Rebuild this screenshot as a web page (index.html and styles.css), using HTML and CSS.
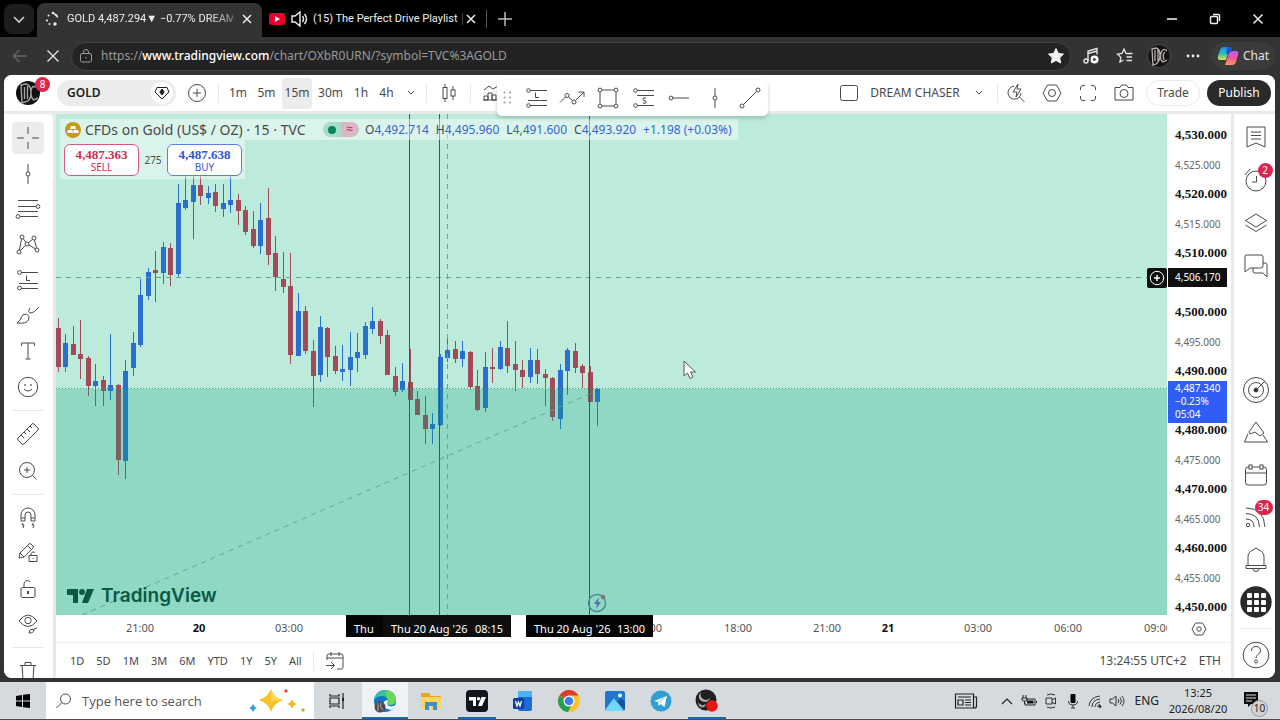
FILE: index.html
```html
<!DOCTYPE html>
<html lang="en">
<head>
<meta charset="utf-8">
<title>GOLD 4,487.294 ▼ −0.77% DREAM CHASER</title>
<link rel="stylesheet" href="styles.css">
</head>
<body>
<div class="tabs">
  <button class="tab-menu" aria-label="Tab actions"><svg width="14" height="14" viewBox="0 0 14 14"><path d="M2 5l5 5 5-5" stroke-width="1.6"/></svg></button>
  <div class="tab tab-active">
    <svg class="fill" width="16" height="16" viewBox="0 0 16 16"><circle cx="3" cy="9.500" r="1.100"/><circle cx="4.500" cy="4.500" r="1"/><circle cx="9" cy="2" r="1.300"/><path d="M10 2l3 1.500 1.500 3h-1.500l-3-3z"/><circle cx="11" cy="13" r="1.700"/><circle cx="5.500" cy="13" r="1"/></svg>
    <span class="tab-title fade">GOLD 4,487.294▼ −0.77% DREAM</span>
    <button class="tab-close" aria-label="Close tab"><svg width="12" height="12" viewBox="0 0 12 12"><path d="M2 2l8 8M10 2l-8 8" stroke-width="1.5"/></svg></button>
  </div>
  <div class="tab tab-second">
    <svg width="16" height="12" viewBox="0 0 16 12"><rect width="16" height="12" rx="3" fill="#e8002d" stroke="none"/><path d="M6 3l5 3-5 3z" fill="#fff" stroke="none"/></svg>
    <svg width="18" height="18" viewBox="0 0 18 18"><path d="M2 6h3l5-4v14l-5-4H2zM12.500 6q2 3 0 6M14.500 4q4 5 0 10" stroke-width="1.400"/></svg>
    <span class="tab-title">(15) The Perfect Drive Playlist</span>
    <i class="tab-sep"></i>
    <button class="tab-close" aria-label="Close tab"><svg width="12" height="12" viewBox="0 0 12 12"><path d="M2 2l8 8M10 2l-8 8" stroke-width="1.5"/></svg></button>
  </div>
  <i class="tab-bar"></i>
  <button class="tab-new" aria-label="New tab"><svg width="16" height="16" viewBox="0 0 16 16"><path d="M8 1v14M1 8h14" stroke-width="1.500"/></svg></button>
  <div class="window-controls">
    <button aria-label="Minimise"><svg width="12" height="12" viewBox="0 0 12 12"><path d="M1 6h10" stroke-width="1.600"/></svg></button>
    <button aria-label="Restore"><svg width="12" height="12" viewBox="0 0 12 12"><rect x="1.500" y="3.500" width="7" height="7" rx="1" stroke-width="1.500"/><path d="M4 1.500h5.500q1 0 1 1V8" stroke-width="1.500"/></svg></button>
    <button aria-label="Close"><svg width="12" height="12" viewBox="0 0 12 12"><path d="M1.500 1.500l9 9M10.500 1.500l-9 9" stroke-width="1.500"/></svg></button>
  </div>
</div>

<div class="address-row">
  <button class="nav nav-dim" aria-label="Back"><svg width="16" height="14" viewBox="0 0 16 14"><path d="M15 7H1.500M7.500 1l-6 6 6 6" stroke-width="1.400"/></svg></button>
  <button class="nav" aria-label="Stop"><svg width="14" height="14" viewBox="0 0 14 14"><path d="M1.500 1.500l11 11M12.500 1.500l-11 11" stroke-width="1.400"/></svg></button>
  <div class="address">
    <svg width="14" height="14" viewBox="0 0 14 14"><rect x="1.500" y="4.500" width="11" height="8.500" rx="1.500"/><path d="M4.500 4.500V3a2.500 2.500 0 0 1 5 0v1.500M7 8v1.500"/></svg>
    <a class="url" href="#">https://<b>www.tradingview.com</b>/chart/OXbR0URN/?symbol=TVC%3AGOLD</a>
    <svg class="star" width="18" height="18" viewBox="0 0 18 18"><path d="M9 1.500l2.300 4.900 5.200.7-3.800 3.600 1 5.300L9 13.400 4.300 16l1-5.300L1.500 7.100l5.200-.7z" fill="#f2f2f2" stroke="#f2f2f2"/></svg>
  </div>
  <div class="browser-tools">
    <button aria-label="Media"><svg width="18" height="18" viewBox="0 0 18 18"><path d="M6 14V4l9-2.500v6M6 6.500l9-2.500" stroke-width="1.400"/><circle cx="4" cy="14" r="2" stroke-width="1.400"/><circle cx="12.500" cy="12.500" r="4" fill="#fff" stroke="none"/><path d="M11.300 10.500l3.200 2-3.200 2z" fill="#333" stroke="none"/></svg></button>
    <button aria-label="Favourites"><svg width="18" height="18" viewBox="0 0 18 18"><path d="M10 6.500L8 2 6 6.500l-4.500.6 3.300 3.200-.8 4.700 3.500-2M10 6.500h6.500M10.500 10H16M10.500 13.500H16" stroke-width="1.300"/></svg></button>
    <button aria-label="Profile"><svg width="24" height="24" viewBox="0 0 24 24"><circle cx="12" cy="12" r="11.500" fill="#171313" stroke="#6b6767" stroke-width=".6"/><path d="M5 5l4-1q4 1 4 7t-4 9l-3 1zM8 6v11M11 5v12M20 7q-4-4-6 2t2 9l4-2M18 8q-3 2-1 8" stroke="#b9b3b0" stroke-width="1.300"/></svg></button>
    <button aria-label="More"><svg width="14" height="4" viewBox="0 0 14 4"><g fill="#eee" stroke="none"><circle cx="2" cy="2" r="1.400"/><circle cx="7" cy="2" r="1.400"/><circle cx="12" cy="2" r="1.400"/></g></svg></button>
    <button class="chat"><svg width="22" height="20" viewBox="0 0 22 20"><defs><linearGradient id="ca" x2="0" y2="1"><stop stop-color="#1a8df0"/><stop offset=".55" stop-color="#27c7b4"/><stop offset="1" stop-color="#ffd43a"/></linearGradient><linearGradient id="cb" x2="0" y2="1"><stop stop-color="#b25cff"/><stop offset=".5" stop-color="#f0559d"/><stop offset="1" stop-color="#ff9a4a"/></linearGradient></defs><path d="M6 1h7l-4 13H3q-3 0-2-4L3 4q1-3 3-3z" fill="url(#ca)" stroke="none"/><path d="M16 5h3q3 0 2 4l-2 7q-1 3-4 3H8l4-12q1-2 4-2z" fill="url(#cb)" stroke="none"/><path d="M10 1h3q2 0 2 4-3 0-4 3H9z" fill="#2453d6" stroke="none"/></svg>Chat</button>
  </div>
</div>

<main class="page">
  <header class="header">
    <button class="avatar" aria-label="Account"><svg width="26" height="26" viewBox="0 0 26 26"><circle cx="13" cy="13" r="12" fill="#111" stroke="none"/><path d="M6 5l5-1q5 1 5 9t-6 9l-3 1zM9.500 7v12M12.500 6v13M21 7q-5-2-5 5t3 8l4-2" stroke="#a7a2a2" stroke-width="1.400"/></svg><span class="badge">8</span></button>
    <div class="symbol"><button class="symbol-name">GOLD</button><button class="symbol-flag" aria-label="Flag"><svg width="16" height="14" viewBox="0 0 16 14"><path d="M3 1.500h10l2 4.500-7 7-7-7z"/><path d="M8 3l2.200 3L8 9 5.800 6z" fill="#222"/></svg></button></div>
    <button class="plus" aria-label="Compare"><svg width="20" height="20" viewBox="0 0 20 20"><circle cx="10" cy="10" r="8.500"/><path d="M10 6v8M6 10h8"/></svg></button>
    <i class="vr"></i>
    <div class="intervals">
      <button class="w26">1m</button><button class="w30">5m</button><button class="w30 on">15m</button><button class="w36">30m</button><button class="w24">1h</button><button class="w26">4h</button>
      <button class="w22" aria-label="More intervals"><svg width="8" height="6" viewBox="0 0 8 6"><path d="M1 1l3 3 3-3"/></svg></button>
    </div>
    <i class="vr"></i>
    <button class="tool44" aria-label="Chart type"><svg width="16" height="20" viewBox="0 0 16 20"><rect x="2" y="4.500" width="4" height="11"/><path d="M4 1v3.500M4 15.500V19M12 3v4M12 13v4"/><rect x="10" y="7" width="4" height="6"/></svg></button>
    <i class="vr"></i>
    <button class="tool40" aria-label="Indicators"><svg width="20" height="20" viewBox="0 0 20 20"><path d="M3 7l5-4 4 3 5-3M3 17v-4h4v4zM7 17v-7h4v7M11 17v-5h4v5zM2 17h14"/></svg></button>
    <div class="header-right">
      <button class="layout-box" aria-label="Layout"><svg width="20" height="18" viewBox="0 0 20 18"><rect x="1.500" y="1.500" width="17" height="15" rx="2"/></svg></button>
      <button class="layout-name">DREAM CHASER</button>
      <button class="layout-menu" aria-label="Manage layouts"><svg width="8" height="6" viewBox="0 0 8 6"><path d="M1 1l3 3 3-3"/></svg></button>
      <i class="vr"></i>
      <button class="w36" aria-label="Quick search"><svg width="20" height="20" viewBox="0 0 20 20"><path d="M8 3.200A6.500 6.500 0 1 0 15 10M13.500 14l5 5M12 1l-5 8h4l-1 5 5-8h-4z"/></svg></button>
      <button class="w36" aria-label="Settings"><svg width="20" height="20" viewBox="0 0 20 20"><path d="M5.500 2h9l4.500 8-4.500 8h-9L1 10z"/><circle cx="10" cy="10" r="3.500"/></svg></button>
      <button class="w36" aria-label="Fullscreen"><svg width="18" height="18" viewBox="0 0 18 18"><path d="M6 1.500H4Q1.500 1.500 1.500 4v2M12 1.500h2q2.500 0 2.500 2.500v2M6 16.500H4Q1.500 16.500 1.500 14v-2M12 16.500h2q2.500 0 2.500-2.500v-2"/></svg></button>
      <button class="w36" aria-label="Snapshot"><svg width="20" height="18" viewBox="0 0 20 18"><path d="M1 3.500h5L7.500 1h5L14 3.500h5V16H1z"/><circle cx="10" cy="9.500" r="4"/></svg></button>
      <button class="trade">Trade</button>
      <button class="publish">Publish</button>
    </div>
    <div class="favorites">
      <svg class="grip" width="9" height="14" viewBox="0 0 9 14"><g fill="#999" stroke="none"><circle cx="1.500" cy="1.500" r="1"/><circle cx="7" cy="1.500" r="1"/><circle cx="1.500" cy="6.500" r="1"/><circle cx="7" cy="6.500" r="1"/><circle cx="1.500" cy="11.500" r="1"/><circle cx="7" cy="11.500" r="1"/></g></svg>
      <button aria-label="Long position"><svg width="24" height="22" viewBox="0 0 24 22"><path d="M5 3.500h17M3 13.500h19M5 18.500h17M10.500 5.500v5h3.500"/><circle cx="3.500" cy="3.500" r="1.800"/><circle cx="3.500" cy="18.500" r="1.800"/></svg></button>
      <button aria-label="Path"><svg width="26" height="18" viewBox="0 0 26 18"><path d="M1 13.500l5.500-5.500M9.500 8l4 3.500M16.500 11.500L25 3M19.500 3H25v5"/><circle cx="8" cy="6.500" r="2"/><circle cx="15" cy="13" r="2"/></svg></button>
      <button aria-label="Rectangle"><svg width="22" height="22" viewBox="0 0 22 22"><path d="M5 3h12M5 19h12M3 5v12M19 5v12"/><circle cx="3" cy="3" r="1.900"/><circle cx="19" cy="3" r="1.900"/><circle cx="3" cy="19" r="1.900"/><circle cx="19" cy="19" r="1.900"/></svg></button>
      <button aria-label="Short position"><svg width="24" height="22" viewBox="0 0 24 22"><path d="M5 3.500h17M5 8.500h17M5 18.500h17M14 11h-2.500q-1 1.300 0 2.300l2 .5q1 1.200 0 2.400H11"/><circle cx="3.500" cy="3.500" r="1.800"/><circle cx="3.500" cy="18.500" r="1.800"/></svg></button>
      <button aria-label="Horizontal ray"><svg width="22" height="6" viewBox="0 0 22 6"><path d="M5 3h16"/><circle cx="3" cy="3" r="1.900"/></svg></button>
      <button aria-label="Vertical line"><svg width="6" height="20" viewBox="0 0 6 20"><path d="M3 0v8M3 12v8"/><circle cx="3" cy="10" r="2"/></svg></button>
      <button aria-label="Trend line"><svg width="22" height="22" viewBox="0 0 22 22"><path d="M4.500 17.500l13-13"/><circle cx="3" cy="19" r="2"/><circle cx="19" cy="3" r="2"/></svg></button>
    </div>
  </header>

  <div class="body">
    <nav class="left" aria-label="Drawing tools">
      <div class="lg lg1">
        <button class="on" aria-label="Cross"><svg width="24" height="24" viewBox="0 0 24 24"><path d="M12 1v7M12 16v7M1 12h7M16 12h7"/></svg></button>
        <button aria-label="Vertical line"><svg width="6" height="20" viewBox="0 0 6 20"><path d="M3 0v8M3 12v8"/><circle cx="3" cy="10" r="2"/></svg></button>
        <button aria-label="Fibonacci"><svg width="26" height="22" viewBox="0 0 26 22"><path d="M3 2.500h20M3 8.500h18M3 13.500h20M5 18.500h18"/><circle cx="23" cy="8.500" r="1.900"/><circle cx="3" cy="18.500" r="1.900"/></svg></button>
        <button aria-label="Patterns"><svg width="24" height="22" viewBox="0 0 24 22"><circle cx="6" cy="3" r="2"/><circle cx="18" cy="4" r="2"/><circle cx="11" cy="10" r="2"/><circle cx="3" cy="18" r="2"/><circle cx="21" cy="16" r="2"/><path d="M5.500 5L3.500 16M7.200 4.700l2.800 3.700M16.500 5.500l-4 3M18.500 6l2 8M9.500 11.500l-5 5M13 11l6.500 4"/></svg></button>
        <button aria-label="Forecasting"><svg width="24" height="22" viewBox="0 0 24 22"><path d="M5 3.500h17M3 14.500h19M5 19.500h17M10.500 6.500v5h3.500"/><circle cx="3.500" cy="3.500" r="1.900"/><circle cx="3.500" cy="19" r="1.900"/></svg></button>
        <button aria-label="Brush"><svg width="26" height="20" viewBox="0 0 26 20"><path d="M2 17q4-3 4.500-6t5-3q4 2 2 6-2 4-11.500 3zM15 2q-3 5 1 5 3 0 8-6"/></svg></button>
        <button aria-label="Text"><svg width="16" height="20" viewBox="0 0 16 20"><path d="M1.500 5V2h13v3M8 2v16M5.500 18h5"/></svg></button>
        <button aria-label="Icons"><svg width="22" height="22" viewBox="0 0 22 22"><circle cx="11" cy="11" r="9.700"/><path d="M7 13q4 4 8 0"/><circle cx="8" cy="9" r=".5"/><circle cx="14" cy="9" r=".5"/></svg></button>
      </div>
      <hr>
      <div class="lg lg2">
        <button aria-label="Measure"><svg width="24" height="24" viewBox="0 0 24 24"><path d="M2 16L16 2q1-1 2 0l4 4q1 1 0 2L8 22q-1 1-2 0l-4-4q-1-1 0-2zM5 13l3 3M8 10l2 2M11 7l3 3M14 4l2 2"/></svg></button>
        <button aria-label="Zoom in"><svg width="20" height="20" viewBox="0 0 20 20"><circle cx="9" cy="9" r="7.500"/><path d="M9 6v6M6 9h6M14.500 14.500l4 4"/></svg></button>
      </div>
      <hr>
      <div class="lg lg3">
        <button aria-label="Magnet"><svg width="20" height="24" viewBox="0 0 20 24"><path d="M3 15V9a7 7 0 0 1 14 0v6h-4V9a3 3 0 0 0-6 0v6zM3 12h4M13 12h4M5 17l-1 2h2l-1 3M15 17l-1 2h2l-1 3"/></svg></button>
        <button aria-label="Keep drawing"><svg width="22" height="22" viewBox="0 0 22 22"><path d="M2 16l1-5 9-9q1-1 2 0l2 2q1 1 0 2l-9 9zM3 11l4 4M10.500 3.500l4 4M12 13.500h8v6h-8zM14 13.500v-2q2-3 4-1M16 16v1"/></svg></button>
        <button aria-label="Lock drawings"><svg width="18" height="22" viewBox="0 0 18 22"><rect x="2" y="9.500" width="14" height="10" rx="1.500"/><path d="M5 9.500V5.500q1-4 5-2.500l1 1"/><path d="M9 13v3" stroke-width="2"/></svg></button>
        <button aria-label="Hide drawings"><svg width="22" height="24" viewBox="0 0 22 24"><path d="M2 9q9-12 18 0-9 11-18 0z"/><circle cx="11" cy="8.500" r="3.200"/><path d="M12 21q0-4 4-4l1 1q0 3-5 3zM17 17l3-1"/></svg></button>
      </div>
      <hr>
      <button aria-label="Delete"><svg width="18" height="20" viewBox="0 0 18 20"><path d="M1 4.500h16M6 4.500v-3h6v3M3 4.500l1 14h10l1-14"/></svg></button>
    </nav>

    <section class="center">
      <div class="chart-row">
        <div class="chart">
          <svg class="plot" id="plot" role="img" aria-label="GOLD 15 minute candles">
            <g id="candles"></g>
            <rect class="zone-low" y="275" width="100%" height="100%"/>
            <path class="dash" d="M391.500 0v600"/>
            <line class="dash" x1="0" x2="100%" y1="163.500" y2="163.500"/>
            <line class="price-line" x1="0" x2="100%" y1="274.500" y2="274.500"/>
            <path class="dash" d="M26 501L536 279"/>
            <path class="vline" d="M353.500 0v600M383.500 0v600M533.500 0v600"/>
            <path d="M628 247v15l3.500-3 2.500 5.500 3-1.500-2.500-5h5z" fill="#fff" stroke="#555"/>
            <circle cx="541" cy="489" r="8.500" stroke="#4c8a9b" stroke-width="1.500"/><path d="M543 483l-5 7h3l-1 5 5-7h-3z" fill="#5672b4" stroke="none"/><circle cx="547" cy="483" r="2.200" fill="#8c6f6d" stroke="none"/>
          </svg>
          <div class="legend">
            <svg width="16" height="16" viewBox="0 0 16 16"><circle cx="8" cy="8" r="8" fill="#c79a12" stroke="none"/><path d="M6 4h4l1 3H5zM3 8h4.500l.5 3H2zM8.500 8H13l1 3H8.500z" fill="#fff" stroke="none"/></svg>
            <span class="legend-title">CFDs on Gold (US$ / OZ) · 15 · TVC</span>
            <span class="status"><i class="dot"></i><i class="approx">≈</i></span>
            <span class="ohlc"><span><em>O</em>4,492.714</span><span><em>H</em>4,495.960</span><span><em>L</em>4,491.600</span><span><em>C</em>4,493.920</span><span>+1.198 (+0.03%)</span></span>
          </div>
          <div class="quotes">
            <button class="sell"><b>4,487.363</b>SELL</button>
            <span class="spread">275</span>
            <button class="buy"><b>4,487.638</b>BUY</button>
          </div>
          <div class="brand"><svg width="30" height="16" viewBox="0 0 30 16"><g fill="#0b5845" stroke="none"><path d="M1 1h11v14H7V7H1z"/><circle cx="16" cy="4" r="2.900"/><path d="M21 1h7l-6 14h-6z"/></g></svg>TradingView</div>
          <button class="add-alert" aria-label="Add alert"><svg width="16" height="16" viewBox="0 0 16 16"><circle cx="8" cy="8" r="6.700" stroke="#fff"/><path d="M8 5v6M5 8h6" stroke="#fff" stroke-width="1.500"/></svg></button>
        </div>
        <div class="scale">
          <b>4,530.000</b><span>4,525.000</span><b>4,520.000</b><span>4,515.000</span><b>4,510.000</b><span></span><b>4,500.000</b><span>4,495.000</span><b>4,490.000</b><span></span><b>4,480.000</b><span>4,475.000</span><b>4,470.000</b><span>4,465.000</span><b>4,460.000</b><span>4,455.000</span><b>4,450.000</b>
          <div class="cursor-price">4,506.170</div>
          <div class="last-price"><span>4,487.340</span><span>−0.23%</span><span>05:04</span></div>
        </div>
      </div>
      <div class="time-row">
        <div class="times">
          <svg class="time-labels"><g text-anchor="middle"><text x="84" y="17">21:00</text><text class="strong" x="143" y="17">20</text><text x="233" y="17">03:00</text><text x="592" y="17">15:00</text><text x="682" y="17">18:00</text><text x="771" y="17">21:00</text><text class="strong" x="832" y="17">21</text><text x="922" y="17">03:00</text><text x="1012" y="17">06:00</text><text x="1102" y="17">09:00</text></g></svg>
          <div class="stamp stamp-a">Thu</div>
          <div class="stamp stamp-b"><span>Thu 20 Aug '26</span><span>08:15</span></div>
          <div class="stamp stamp-c"><span>Thu 20 Aug '26</span><span>13:00</span></div>
        </div>
        <button class="axis-settings" aria-label="Axis settings"><svg width="16" height="14" viewBox="0 0 16 14"><path d="M4.500 1h7L15 7l-3.500 6h-7L1 7z"/><circle cx="8" cy="7" r="2.200"/></svg></button>
      </div>
      <footer class="ranges">
        <button>1D</button><button>5D</button><button>1M</button><button>3M</button><button>6M</button><button>YTD</button><button>1Y</button><button>5Y</button><button>All</button>
        <i class="vr"></i>
        <button class="goto" aria-label="Go to date"><svg width="20" height="20" viewBox="0 0 20 20"><path d="M2 9V5q0-2 2-2h12q2 0 2 2v11q0 2-2 2h-4M2 7h16M6 1v4M14 1v4M1 14.500h8M6 11l3.500 3.500L6 18"/></svg></button>
        <button class="clock">13:24:55 UTC+2</button><button class="session">ETH</button>
      </footer>
    </section>

    <nav class="right" aria-label="Panels">
      <div class="rg rg1">
        <button aria-label="Watchlist"><svg width="22" height="24" viewBox="0 0 22 24"><path d="M2 2h18v20l-9-4-9 4zM6 7h10M6 10.500h10M6 14h10"/></svg></button>
        <button aria-label="Alerts"><svg width="26" height="26" viewBox="0 0 26 26"><circle cx="13" cy="14" r="10"/><path d="M13.500 9v6H9M2 8l5-6"/></svg><span class="badge">2</span></button>
        <button aria-label="Object tree"><svg width="24" height="22" viewBox="0 0 24 22"><path d="M12 2l10.500 6.500L12 15 1.500 8.500zM1.500 13L12 19.500 22.500 13"/></svg></button>
        <button aria-label="Chats"><svg width="26" height="26" viewBox="0 0 26 26"><path d="M3 2h15q2 0 2 2v9q0 2-2 2H7l-5 4V4q0-2 1-2zM20 10h2q2 0 2 2v12l-4-4h-8q-2 0-2-2v-3"/></svg></button>
      </div>
      <div class="rg rg2">
        <button aria-label="Screeners"><svg width="28" height="28" viewBox="0 0 28 28"><circle cx="14" cy="14" r="12.500"/><circle cx="14" cy="14" r="7.500"/><circle cx="14" cy="14" r="2" fill="#222"/><path d="M14 14l9-9"/></svg></button>
        <button aria-label="Pine"><svg width="26" height="24" viewBox="0 0 26 24"><path d="M6 12L13 2l8 11-4 3-5-4-5 2zM5 14L1.500 22h23L20 15"/></svg></button>
        <button aria-label="Calendar"><svg width="24" height="24" viewBox="0 0 24 24"><path d="M5 4H4Q1.500 4 1.500 6.500v13Q1.500 22 4 22h16q2.500 0 2.500-2.500v-13Q22.500 4 20 4h-1M8 4h8M1.500 10h21"/><rect x="5" y="2" width="3" height="4"/><rect x="16" y="2" width="3" height="4"/></svg></button>
        <button aria-label="News"><svg width="24" height="24" viewBox="0 0 24 24"><circle cx="4" cy="20" r="1.700"/><path d="M2 14q8 0 8 8M2 8.500q13 0 13.500 13.500M2 3q18 0 19 19"/></svg><span class="badge wide">34</span></button>
        <button aria-label="Notifications"><svg width="24" height="26" viewBox="0 0 24 26"><path d="M2 18.500h20v3H2zM4 18.500V10q0-5 5-7l3-2 3 2q5 2 5 7v8.500M9 22q0 2.500 3 2.500t3-2.500"/></svg></button>
        <button aria-label="Products"><svg width="32" height="32" viewBox="0 0 32 32"><circle cx="16" cy="16" r="15.700" fill="#2a2a2a" stroke="none"/><g fill="#fff" stroke="none"><rect x="7" y="7" width="5" height="5" rx="1"/><rect x="14" y="7" width="5" height="5" rx="1"/><rect x="21" y="7" width="5" height="5" rx="1"/><rect x="7" y="14" width="5" height="5" rx="1"/><rect x="14" y="14" width="5" height="5" rx="1"/><rect x="21" y="14" width="5" height="5" rx="1"/><rect x="7" y="21" width="5" height="5" rx="1"/><rect x="14" y="21" width="5" height="5" rx="1"/><rect x="21" y="21" width="5" height="5" rx="1"/></g></svg></button>
      </div>
      <hr>
      <button aria-label="Help"><svg width="28" height="28" viewBox="0 0 28 28"><circle cx="14" cy="14" r="12.800"/><path d="M9.500 10q0-4.500 4.500-4.500t4.500 4.500q0 2-2.500 3.500-2 1.500-2 3.500"/><circle cx="14" cy="20.500" r="1.500"/></svg></button>
    </nav>
  </div>
</main>

<div class="taskbar">
  <button class="start" aria-label="Start"><svg width="16" height="16" viewBox="0 0 16 16"><path d="M1 3l6-1v5.500H1zM8 1.800L15 1v6.500H8zM1 8.500h6V14l-6-1zM8 8.500h7V15l-7-.8z" fill="#000" stroke="none"/></svg></button>
  <label class="search">
    <svg width="18" height="18" viewBox="0 0 18 18"><circle cx="10.500" cy="7" r="5"/><path d="M7 10.500L1.500 16"/></svg>
    <input type="text" placeholder="Type here to search" aria-label="Type here to search">
    <svg width="60" height="26" viewBox="0 0 60 26"><g stroke="none"><path d="M24 1q3 9 12 11-9 3-12 12-3-9-12-12Q21 9 24 1z" fill="#f8c22a"/><path d="M24 1q3 9 12 11l-12 1z" fill="#fbd85a"/><path d="M45 11q1 4 5 5-4 1-5 5-1-4-5-5 4-1 5-5z" fill="#f3b52c"/><path d="M6 16q1 3 4 4-3 1-4 4-1-3-4-4 3-1 4-4z" fill="#2ba0dc"/><circle cx="39" cy="3" r="1.700" fill="#d9533c"/><circle cx="56" cy="22" r="1.700" fill="#9fbb3e"/></g></svg>
  </label>
  <button class="app" aria-label="Task view"><svg width="18" height="18" viewBox="0 0 18 18"><path d="M2 2v2h9V2M2 16v-2h9v2M2 6h9v6H2zM15 1v5M15 9v8" stroke="#222" stroke-width="1.200"/><rect x="14" y="6" width="2" height="3" fill="#222" stroke="none"/></svg></button>
  <button class="app lit" aria-label="Edge"><svg width="24" height="24" viewBox="0 0 24 24"><g stroke="none"><circle cx="12" cy="12" r="11" fill="#1374c6"/><path d="M1 11Q3 1 13 1q9 1 10 9 0 6-6 6-4-1-2-4 0-5-6-5-5 0-8 4z" fill="#36c2a7"/><path d="M13 1q9 1 10 9 0 6-6 6-4-1-2-4 0-3-2-4 1-4 0-7z" fill="#66d75a"/><path d="M15 12q-2 3 1 5 3 1 7-1-2 4-5 5-7-1-8-5 0-4 4-5z" fill="#eaf6fb"/><circle cx="7" cy="18" r="5.500" fill="#4d484a"/><path d="M5 14v8M8 14q-2 4 2 7" stroke="#b5afb0"/></g></svg></button>
  <button class="app" aria-label="File Explorer"><svg width="22" height="20" viewBox="0 0 22 20"><g stroke="none"><path d="M1 2h8l2 3h10v13H1z" fill="#e4a52a"/><path d="M1 6h20v12H1z" fill="#fcd462"/><path d="M5 19v-8h12v8h-4v-4H9v4z" fill="#3d8fd0"/></g></svg></button>
  <button class="app open" aria-label="TradingView"><svg width="24" height="24" viewBox="0 0 24 24"><rect x="1" y="1" width="22" height="22" rx="4" fill="#12151b" stroke="none"/><g fill="#fff" stroke="none"><path d="M4 8h7v9H8v-5.500H4z"/><circle cx="13.500" cy="9.700" r="1.700"/><path d="M16.500 8H21l-4 9h-4z"/></g></svg></button>
  <button class="app" aria-label="Word"><svg width="20" height="22" viewBox="0 0 20 22"><g stroke="none"><rect x="5" y="1" width="14" height="20" rx="2" fill="#1c6bd8"/><path d="M5 3q0-2 2-2h10q2 0 2 2v4H5z" fill="#4fb3f2"/><rect y="8" width="11" height="11" rx="1.500" fill="#113f9c"/></g><path d="M2.500 11l1.500 5 1.500-4L7 16l1.500-5" stroke="#fff" stroke-width="1.200"/></svg></button>
  <button class="app" aria-label="Chrome"><svg width="24" height="24" viewBox="0 0 24 24"><g stroke="none"><circle cx="12" cy="12" r="11" fill="#f7c52c"/><path d="M12 12L2.500 6.500A11 11 0 0 1 21.500 6.500H12z" fill="#df3b30"/><path d="M2.500 6.500A11 11 0 0 0 11 23l4-8-3-2z" fill="#249e53"/><circle cx="12" cy="12" r="5.500" fill="#fff"/><circle cx="12" cy="12" r="4.300" fill="#3c7de6"/></g></svg></button>
  <button class="app" aria-label="Photos"><svg width="22" height="22" viewBox="0 0 22 22"><g stroke="none"><rect x="1" y="1" width="20" height="20" rx="2" fill="#2276d2"/><path d="M1 20L10 8l10 13H3q-2 0-2-1z" fill="#6ed8f5"/><path d="M10 8l11 12V12l-4-4-4 4z" fill="#145299"/><circle cx="16" cy="5.500" r="2" fill="#fff"/></g></svg></button>
  <button class="app" aria-label="Telegram"><svg width="22" height="22" viewBox="0 0 22 22"><circle cx="11" cy="11" r="10.500" fill="#2f9fd6" stroke="none"/><path d="M4 11l13-5-2.500 11-4-3-2 2-.5-4z" fill="#fff" stroke="none"/><path d="M8 12l6-4-4 5" stroke="#9ccfe9"/></svg></button>
  <button class="app open" aria-label="OBS"><svg width="24" height="24" viewBox="0 0 24 24"><g stroke="none"><circle cx="11" cy="11" r="10.500" fill="#211f20"/><path d="M6 3q-2 6 4 8 6 0 6-6-1 8-6 8-7-1-6-7z" fill="#b5b1b1"/><path d="M3 13q3 5 8 2-2 6-7 2z" fill="#a09b9c"/><circle cx="17" cy="17" r="5.800" fill="#f01414"/></g></svg></button>
  <div class="tray">
    <button class="news" aria-label="News"><svg width="24" height="18" viewBox="0 0 24 18"><path d="M1.500 2h18v14h-18zM19.500 5h3v9q0 2-2 2h-3M4 5h13M4 8h5v5H4zM11 8h6M11 10.500h6M11 13h6" stroke="#222" stroke-width="1.200"/></svg></button>
    <button aria-label="Hidden icons"><svg width="12" height="8" viewBox="0 0 12 8"><path d="M1 7l5-5 5 5" stroke="#222" stroke-width="1.200"/></svg></button>
    <button aria-label="Battery"><svg width="16" height="12" viewBox="0 0 16 12"><path d="M5 4h9v6H4V8M2 0v3M5 0v3M1 3h5v2L4.500 6h-2L1 5zM3.500 6v3M15.500 6v2" stroke="#222"/><rect x="6" y="5.500" width="6.500" height="3" fill="#111" stroke="none"/></svg></button>
    <button aria-label="Camera"><svg width="12" height="16" viewBox="0 0 12 16"><path d="M2 2q4-2 8 0M2 14q4 2 8 0M1 5h6v6H1zM7 7l3.500-2v6L7 9.500" stroke="#333"/></svg></button>
    <button aria-label="Microphone"><svg width="12" height="16" viewBox="0 0 12 16"><rect x="3.500" y="1" width="5" height="9" rx="1" fill="#000" stroke="none"/><path d="M1.500 8q0 4 4.500 4t4.500-4M6 12v3M4 15h4" stroke="#333"/></svg></button>
    <button aria-label="Network"><svg width="14" height="14" viewBox="0 0 14 14"><path d="M1 12Q2 3 12 2M4 13q0-7 8-8M7 13q0-4 5-5M9.500 13q0-2 2.500-2.500" stroke="#333"/><circle cx="12" cy="12.500" r="1" fill="#222"/></svg></button>
    <button aria-label="Volume"><svg width="16" height="14" viewBox="0 0 16 14"><path d="M1 5h2.500L7 2v10L3.500 9H1zM9 5q1.500 2 0 4M11 3.500q3 3.500 0 7M13 2q4 5 0 10" stroke="#333"/></svg></button>
    <span class="lang">ENG</span>
    <span class="date"><span>13:25</span><span>2026/08/20</span></span>
    <button class="action" aria-label="Notifications"><svg width="24" height="24" viewBox="0 0 24 24"><path d="M2 3h14v12H9l-3 3v-3H2z" fill="#0c0c0c" stroke="none"/><path d="M4 6h10M4 9h10M4 12h6" stroke="#ddd"/></svg><span class="count">10</span></button>
  </div>
</div>
<script src="chart.js"></script>
</body>
</html>
```
FILE: styles.css
```css
* { box-sizing: border-box; }
body { margin: 0; height: 100vh; display: flex; flex-direction: column; overflow: hidden; background: #333; color: #4a4a4a; font: 12px/16px "Noto Sans", "Open Sans", sans-serif; }
button { margin: 0; padding: 0; border: 0; background: none; color: inherit; font: inherit; display: flex; align-items: center; justify-content: center; flex: none; white-space: nowrap; }
svg { fill: none; stroke: currentColor; stroke-width: 1; flex: none; display: block; }
hr { border: 0; margin: 7px 0; height: 1px; width: 32px; background: #e6e6e6; flex: none; }
i { font-style: normal; }

.tabs { height: 37px; background: #000; display: flex; align-items: center; color: #eee; flex: none; }
.tab-menu { width: 30px; height: 30px; border-radius: 8px; background: #1d1d1d; margin-left: 4px; color: #ccc; }
.tab { display: flex; align-items: center; }
.tab-active { align-self: flex-end; width: 225px; height: 34px; margin-left: 3px; padding: 0 8px 3px 7px; background: #333; border-radius: 8px 8px 0 0; gap: 7px; }
.fill { fill: currentColor; stroke: none; }
.tab-title { font: 11px/16px Roboto, "Noto Sans", sans-serif; white-space: nowrap; overflow: hidden; }
.tab-active .tab-title { flex: 1; }
.fade { mask-image: linear-gradient(90deg, #000 85%, #0006); }
.tab-close { width: 14px; height: 16px; }
.tab-second { padding-left: 7px; gap: 1px; width: 216px; }
.tab-second > svg { margin-right: 4px; }
.tab-second .tab-title { flex: 1; }
.tab-sep { width: 1px; height: 12px; background: #444; }
.tab-bar { width: 1px; height: 18px; background: #555; margin-left: 8px; }
.tab-new { width: 36px; height: 30px; color: #bbb; }
.window-controls { margin-left: auto; display: flex; padding-right: 1px; }
.window-controls button { width: 43px; height: 30px; }

.address-row { height: 38px; flex: none; display: flex; align-items: center; color: #e4e4e4; padding: 0 5px 0 3px; }
.nav { width: 33px; height: 28px; }
.nav-dim { color: #666; }
.address { flex: 1; min-width: 0; height: 29px; margin-left: 2px; padding: 0 5px 0 7px; border-radius: 15px; border: 1px solid #424242; background: #232323; display: flex; align-items: center; gap: 8px; color: #9a9a9a; }
.url { flex: 1; color: #9a9a9a; text-decoration: none; font: 12px/18px "Noto Sans", sans-serif; white-space: nowrap; overflow: hidden; }
.url b { font-weight: 500; color: #fff; }
.browser-tools { display: flex; align-items: center; padding-left: 3px; }
.browser-tools button { width: 34px; height: 28px; }
.browser-tools .chat { width: 64px; margin-left: 1px; border-radius: 14px; background: #3b3b3b; gap: 4px; font-size: 12px; }

.page { flex: 1; min-height: 0; margin: 0 5px 4px 4px; border-radius: 8px; overflow: hidden; background: #e9e9e9; display: flex; flex-direction: column; gap: 3px; }
.header { position: relative; height: 36px; flex: none; background: #fff; display: flex; align-items: center; }
.vr { width: 1px; height: 20px; background: #e9e9e9; flex: none; }
.avatar { position: relative; width: 26px; height: 26px; margin-left: 11px; }
.badge { position: absolute; right: -9px; top: -3px; min-width: 15px; height: 15px; border-radius: 8px; background: #dc2650; color: #fff; font-size: 10px; line-height: 15px; text-align: center; }
.badge.wide { min-width: 18px; }
.symbol { width: 119px; height: 26px; margin-left: 16px; border-radius: 13px; background: #ececec; display: flex; align-items: center; justify-content: space-between; padding: 0 3px 0 10px; color: #222; }
.symbol-name { font-weight: 600; }
.symbol-flag { width: 22px; height: 22px; border-radius: 50%; background: #fff; }
.plus { width: 42px; height: 26px; }
.intervals { display: flex; padding: 0 4px 0 6px; justify-content: space-between; width: 207px; }
.intervals button { height: 31px; border-radius: 4px; }
.on { background: #ececec; }
.w22 { width: 22px; } .w24 { width: 24px; } .w26 { width: 26px; } .w30 { width: 30px; } .w36 { width: 36px; }
.tool44 { width: 43px; height: 30px; }
.tool40 { width: 40px; height: 30px; }
.header-right { margin-left: auto; display: flex; align-items: center; padding-right: 4px; }
.layout-box { width: 34px; height: 30px; }
.layout-name { width: 98px; }
.layout-menu { width: 30px; margin-right: 3px; }
.trade { width: 54px; height: 26px; border: 1px solid #eaeaea; border-radius: 13px; margin-left: 4px; }
.publish { width: 64px; height: 26px; border-radius: 13px; background: #2a2a2a; color: #fff; margin-left: 7px; }
.favorites { position: absolute; z-index: 3; left: 493px; top: 5px; width: 271px; height: 36px; padding-left: 6px; border-radius: 5px; background: #fff; box-shadow: 0 2px 4px #0003; display: flex; align-items: center; }
.favorites button { flex: 1; height: 30px; }
.grip { margin-right: 7px; }

.body { flex: 1; min-height: 0; display: flex; gap: 3px; }
.left { width: 49px; background: #fff; display: flex; flex-direction: column; align-items: center; padding: 8px 2px 0 0; overflow: hidden; flex: none; border-top-right-radius: 4px; }
.left button { width: 32px; height: 32px; border-radius: 4px; }
.lg, .rg { display: flex; flex-direction: column; justify-content: space-between; flex: none; }
.lg1 { height: 281px; } .lg2 { height: 69px; } .lg3 { height: 138px; }
.right { width: 41px; background: #fff; display: flex; flex-direction: column; align-items: center; padding: 7px 0 7px 2px; flex: none; }
.right button { position: relative; width: 32px; height: 32px; }
.right hr { margin: 10px 0; }
.right .badge { right: -1px; top: -1px; }
.rg1 { height: 161px; } .rg2 { height: 244px; margin-top: auto; }

.center { flex: 1; min-width: 0; background: #fff; display: flex; flex-direction: column; }
.chart-row { flex: 1; min-height: 0; display: flex; }
.chart { position: relative; flex: 1; min-width: 0; overflow: hidden; background: #bcebdc; }
.plot { position: absolute; left: 0; top: 0; width: 100%; height: 100%; }
.zone-low { fill: #04a07c; fill-opacity: .25; stroke: none; }
.candle-up { fill: #2a6fce; stroke: none; }
.candle-down { fill: #a34a58; stroke: none; }
.dash { stroke: #6ba393; stroke-dasharray: 5 5; }
.price-line { stroke: #4c9c87; stroke-dasharray: 1 2; }
.vline { stroke: #2f6052; }
.legend { position: relative; width: fit-content; margin: 5px 0 0 4px; padding: 0 6px 0 5px; height: 21px; display: flex; align-items: center; background: #ffffff73; white-space: nowrap; }
.legend-title { margin-left: 4px; font-size: 14px; width: 231px; }
.status { margin-left: 7px; display: flex; height: 15px; border-radius: 8px; overflow: hidden; width: 36px; }
.status i { flex: 1; text-align: center; }
.dot { background: #a8dcc8; display: flex; align-items: center; justify-content: center; }
.dot::before { content: ""; width: 8px; height: 8px; border-radius: 50%; background: #08845c; }
.approx { background: #dab7c4; color: #c02060; line-height: 14px; }
.ohlc { margin-left: 6px; display: flex; gap: 7px; color: #3565d0; font: 12px/16px "Noto Sans", sans-serif; }
.ohlc em { font-style: normal; color: #3a4a48; }
.quotes { position: relative; width: 185px; height: 39px; margin-left: 4px; padding: 4px 3px 3px 4px; display: flex; justify-content: space-between; background: #ffffff73; align-items: center; }
.quotes button { width: 75px; height: 32px; border-radius: 6px; background: #fff; flex-direction: column; font-size: 10px; line-height: 12px; }
.quotes b { font: bold 13px/13px "Liberation Serif", serif; }
.sell { border: 1px solid #d25b77; color: #cb2c50; }
.buy { border: 1px solid #5b7fdc; color: #2f56d0; }
.spread { font-size: 10px; }
.brand { position: absolute; left: 10px; bottom: 7px; display: flex; align-items: center; gap: 5px; color: #0b5845; font: 600 19px/24px Inter, sans-serif; }
.add-alert { position: absolute; right: 0; top: 154px; width: 20px; height: 20px; background: #0f0f0f; border-radius: 2px; }
.scale { position: relative; width: 64px; flex: none; padding: 13px 0 0 8px; display: flex; flex-direction: column; justify-content: space-between; font-size: 10px; line-height: 16px; color: #666; }
.scale > span { height: 16px; }
.scale b { color: #111; font: bold 13px/16px "Liberation Serif", serif; }
.cursor-price { position: absolute; left: 1px; top: 154px; width: 59px; height: 19px; padding-left: 7px; background: #0f0f0f; color: #fff; line-height: 19px; }
.last-price { position: absolute; left: 1px; top: 267px; width: 59px; padding: 1px 0 2px 7px; background: #2f5df5; color: #fff; line-height: 13px; display: flex; flex-direction: column; }
.time-row { height: 28px; flex: none; display: flex; border-bottom: 1px solid #eee; }
.times { position: relative; flex: 1; min-width: 0; overflow: hidden; }
.time-labels { width: 100%; height: 27px; fill: #555; stroke: none; font-size: 11px; }
.strong { font-weight: 700; fill: #111; }
.stamp { position: absolute; top: 0; height: 22px; background: #050505; color: #fff; font-size: 11px; line-height: 27px; overflow: hidden; padding: 0 8px; display: flex; justify-content: space-between; }
.stamp-a { left: 290px; width: 40px; }
.stamp-b { left: 327px; width: 128px; background: #0f0f0f; }
.stamp-c { left: 470px; width: 127px; }
.axis-settings { width: 64px; height: 27px; }
.ranges { height: 35px; flex: none; display: flex; align-items: center; gap: 12px; padding: 0 10px 0 14px; font-size: 11px; }
.ranges .vr { margin: 0 -1px; }
.ranges .clock { margin-left: auto; font-size: 12px; }
.ranges .session { font-size: 12px; }

.taskbar { height: 38px; flex: none; border-bottom: 1px solid #4a4d50; background: #d5dade; display: flex; align-items: center; }
.start { width: 46px; height: 37px; }
.search { width: 268px; height: 37px; background: #fff; display: flex; align-items: center; padding: 0 7px 0 9px; gap: 9px; flex: none; }
.search input { flex: 1; min-width: 0; border: 0; padding: 0; outline: 0; background: none; font: 13px/18px "Open Sans", sans-serif; color: #444; }
.search input::placeholder { color: #555; opacity: 1; }
.app { width: 46px; height: 37px; }
.lit { margin-left: 2px; background: #eff3f6; box-shadow: inset 0 -2px #1769ae; }
.open { background: linear-gradient(#1769ae, #1769ae) center bottom / 38px 2px no-repeat; }
.tray { margin-left: auto; display: flex; align-items: center; color: #222; padding-right: 9px; }
.tray button { width: 22px; height: 36px; }
.tray .news { width: 60px; }
.lang { margin-left: 6px; }
.date { width: 62px; margin-left: 8px; display: flex; flex-direction: column; align-items: center; font-size: 11px; }
.tray .action { position: relative; width: 34px; margin-left: 8px; }
.count { position: absolute; right: 3px; bottom: 2px; width: 17px; height: 17px; border: 1px solid #999; border-radius: 50%; background: #cfd3d6; font-size: 10px; line-height: 15px; text-align: center; }
```
FILE: chart.js
```js
// Rows: direction, high, body top, body bottom, low (thirds of a pixel).
const sessions = [
  { first: 0, top: 56, rows: `d 443 474 590 607|u 493 519 590 607|d 468 522 554 554|d 449 552 566 627|d 558 563 647 678|u 582 632 647 709|d 618 630 663 709|u 493 645 663 690|d 643 645 869 914|u 570 603 872 928|u 485 519 594 618|u 328 375 524 531|u 295 306 377 389|d 243 299 310 396|u 215 232 309 341|d 218 235 315 347|u 41 100 312 323|u 0 89 113 119|u 10 44 96 207|d 10 44 79 104|u 49 69 84 101|d 41 66 107 127|u 43 99 116 140|u 10 89 105 130|d 71 89 122 165|d 108 120 186 195|d 122 178 228 234|u 99 150 228 253|d 55 145 254 285|d 198 249 322 364|d 246 327 352 368|d 249 348 554 582|u 370 423 557 557|d 408 423 543 552|d 510 543 619 712|u 438 471 615 637|d 471 473 560 622` },
  { first: 37, top: 166, rows: `d 198 228 272 281|u 194 267 277 303|u 155 231 269 317|u 160 216 233 275|u 125 138 224 238|u 82 124 146 162|d 116 124 168 192|d 150 166 286 286|d 261 288 336 347|u 250 303 330 335|d 207 307 359 359|d 333 357 405 405|d 349 405 446 491|u 398 433 446 493|u 222 231 435 437|u 170 209 234 247|d 184 206 237 250|u 183 213 237 262|d 212 217 320 330|d 270 318 390 392|u 217 262 384 395|d 205 261 266 309|u 184 200 266 269|d 124 203 258 280|d 183 253 269 333|d 241 270 292 323|u 205 239 291 308|d 208 239 282 312|d 267 282 294 378|d 291 293 410 424|u 253 270 416 446|u 203 211 272 345|d 190 213 264 280|d 253 258 279 325|d 258 276 366 366|u 325 327 366 437` }
];
const group = document.getElementById('candles');
function bar(cls, x, y, width, height) {
  const r = document.createElementNS('http://www.w3.org/2000/svg', 'rect');
  r.setAttribute('class', cls);
  r.setAttribute('x', x);
  r.setAttribute('y', y);
  r.setAttribute('width', width);
  r.setAttribute('height', height);
  group.append(r);
}
for (const s of sessions) {
  s.rows.split('|').forEach((row, n) => {
    const [dir, ...v] = row.split(' ');
    const [high, top, bottom, low] = v.map(k => Math.round(s.top + k / 3));
    const x = Math.round(2 + (s.first + n) * 7.486);
    const cls = dir === 'u' ? 'candle-up' : 'candle-down';
    bar(cls, x, high, 1, low - high);
    bar(cls, x - 2, top, 5, bottom - top);
  });
}
```
